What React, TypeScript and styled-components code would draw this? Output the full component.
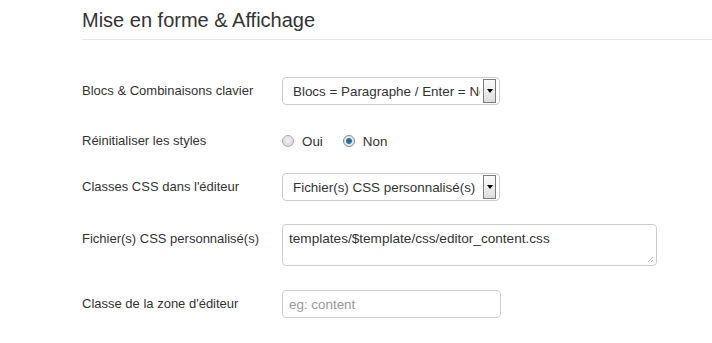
import styled, { createGlobalStyle } from "styled-components";

const GlobalStyle = createGlobalStyle`
  html, body {
    margin: 0;
    padding: 0;
    background: #fff;
  }
  body {
    font-family: "Liberation Sans", Arial, sans-serif;
    color: #333;
  }
`;

const Page = styled.div`
  width: 712px;
  height: 343px;
  padding-left: 82px;
  box-sizing: border-box;
  overflow: hidden;
`;

const Legend = styled.h2`
  margin: 0;
  padding: 10px 0 9px;
  font-size: 20px;
  line-height: 20px;
  font-weight: normal;
  color: #333;
  border-bottom: 1px solid #e5e5e5;
`;

const Form = styled.div`
  padding-top: 37px;
`;

const Row = styled.div<{ $space: number }>`
  display: grid;
  grid-template-columns: 200px auto;
  align-items: start;
  margin-bottom: ${(p) => p.$space}px;
`;

const Label = styled.label<{ $h: number }>`
  font-size: 13px;
  line-height: ${(p) => p.$h}px;
  color: #333;
`;

const SelectBox = styled.div`
  width: 218px;
  height: 28px;
  box-sizing: border-box;
  border: 1px solid #ccc;
  border-radius: 4px;
  display: flex;
  align-items: center;
  padding: 0 3px 0 10px;
  background: #fff;
`;

const SelectText = styled.span`
  flex: 1;
  font-size: 13.4px;
  color: #333;
  white-space: nowrap;
  overflow: hidden;
  margin-right: 3px;
`;

const DropButton = styled.span`
  width: 13px;
  height: 24px;
  box-sizing: border-box;
  border: 1px solid #7a7a7a;
  background: linear-gradient(#fbfbfb, #dedede);
  display: flex;
  align-items: center;
  justify-content: center;
  &::after {
    content: "";
    border-left: 3.5px solid transparent;
    border-right: 3.5px solid transparent;
    border-top: 4px solid #000;
  }
`;

const Radios = styled.div`
  display: flex;
  align-items: center;
  height: 28px;
  font-size: 13.4px;
`;

const RadioOption = styled.span`
  display: flex;
  align-items: center;
  margin-right: 20px;
`;

const RadioDot = styled.span<{ $on?: boolean }>`
  width: 12px;
  height: 12px;
  box-sizing: border-box;
  border-radius: 50%;
  border: 1px solid ${(p) => (p.$on ? "#7f8a93" : "#a9a9a9")};
  background: ${(p) =>
    p.$on
      ? "radial-gradient(circle, #1e5a86 0, #2c7bb4 2.5px, #dfe6ec 3.5px, #f4f6f8 100%)"
      : "radial-gradient(circle at 50% 40%, #f2f2f2, #d4d4d4)"};
  margin-right: 8px;
`;

const TextArea = styled.div`
  width: 375px;
  height: 42px;
  box-sizing: border-box;
  border: 1px solid #ccc;
  border-radius: 4px;
  padding: 6px 6px;
  font-size: 13.6px;
  color: #333;
  white-space: nowrap;
  overflow: hidden;
  position: relative;
`;

const Grip = styled.svg`
  position: absolute;
  right: 2px;
  bottom: 2px;
`;

const TextInput = styled.div`
  width: 219px;
  height: 28px;
  box-sizing: border-box;
  border: 1px solid #ccc;
  border-radius: 4px;
  padding: 0 6px;
  display: flex;
  align-items: center;
  font-size: 13.4px;
  color: #999;
`;

function Select({ value }: { value: string }) {
  return (
    <SelectBox>
      <SelectText>{value}</SelectText>
      <DropButton />
    </SelectBox>
  );
}

export default function App() {
  return (
    <>
      <GlobalStyle />
      <Page>
        <Legend>Mise en forme &amp; Affichage</Legend>
        <Form>
          <Row $space={22}>
            <Label $h={28}>Blocs &amp; Combinaisons clavier</Label>
            <Select value="Blocs = Paragraphe / Enter = Nouveau bloc" />
          </Row>
          <Row $space={18}>
            <Label $h={28}>Réinitialiser les styles</Label>
            <Radios>
              <RadioOption>
                <RadioDot />
                Oui
              </RadioOption>
              <RadioOption>
                <RadioDot $on />
                Non
              </RadioOption>
            </Radios>
          </Row>
          <Row $space={23}>
            <Label $h={28}>Classes CSS dans l'éditeur</Label>
            <Select value="Fichier(s) CSS personnalisé(s)" />
          </Row>
          <Row $space={24}>
            <Label $h={30}>Fichier(s) CSS personnalisé(s)</Label>
            <TextArea>
              templates/$template/css/editor_content.css
              <Grip width="7" height="7" viewBox="0 0 7 7">
                <path d="M6 1 L1 6 M6 4 L4 6" stroke="#bbb" strokeWidth="1" />
              </Grip>
            </TextArea>
          </Row>
          <Row $space={0}>
            <Label $h={28}>Classe de la zone d'éditeur</Label>
            <TextInput>eg: content</TextInput>
          </Row>
        </Form>
      </Page>
    </>
  );
}
